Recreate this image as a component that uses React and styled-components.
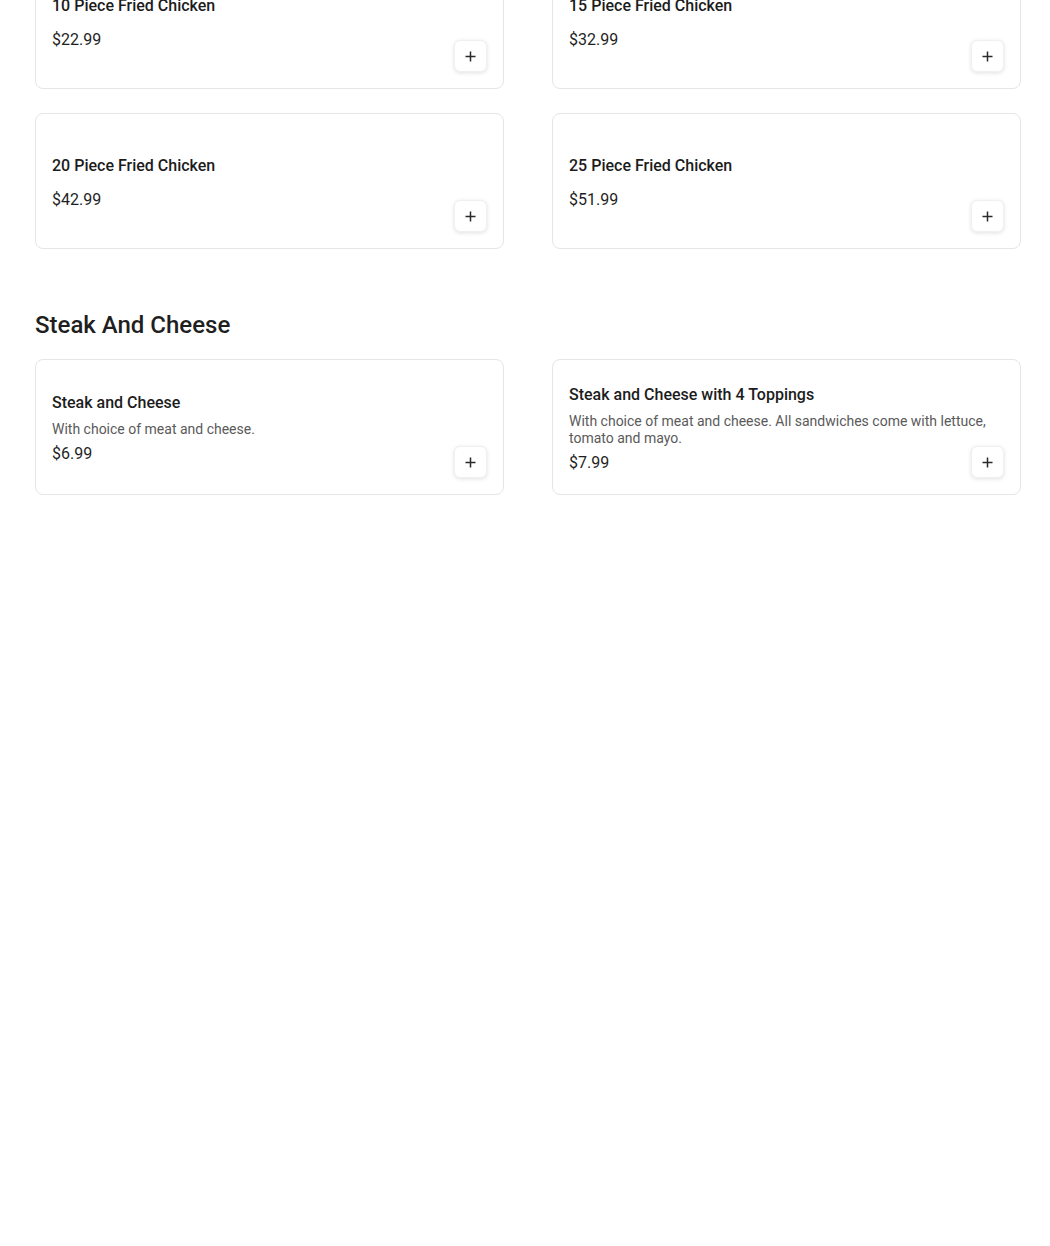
import React from 'react'
import styled, { createGlobalStyle } from 'styled-components'

const GlobalStyle = createGlobalStyle`
  body {
    margin: 0;
    background: #ffffff;
    font-family: Roboto, 'Liberation Sans', sans-serif;
    color: #1f1f1f;
  }
`

const Page = styled.div`
  box-sizing: border-box;
  width: 1050px;
  padding: 0 29px 40px 35px;
  margin-top: -47px;
`

const Section = styled.section`
  & + & {
    margin-top: 62px;
  }
`

const SectionTitle = styled.h2`
  margin: 0 0 20px;
  font-size: 24px;
  line-height: 28px;
  font-weight: 500;
  color: #1f1f1f;
`

const Grid = styled.div`
  display: grid;
  grid-template-columns: 469px 469px;
  column-gap: 48px;
  row-gap: 24px;
`

const Card = styled.div`
  box-sizing: border-box;
  height: 136px;
  padding: 16px;
  border: 1px solid #e6e6e6;
  border-radius: 8px;
  background: #fff;
  display: grid;
  grid-template: 1fr / 1fr;
`

const Info = styled.div`
  grid-area: 1 / 1;
  display: flex;
  flex-direction: column;
  justify-content: center;
  padding-top: 3px;
`

const Name = styled.div`
  font-size: 16px;
  line-height: 20px;
  font-weight: 500;
  color: #1c1c1c;
`

const Desc = styled.div`
  margin-top: 8px;
  font-size: 14px;
  line-height: 17px;
  color: #5a5a5a;
`

const Price = styled.div`
  margin-top: 6px;
  font-size: 16px;
  line-height: 20px;
  color: #1f1f1f;
`

const AddButton = styled.button`
  grid-area: 1 / 1;
  justify-self: end;
  align-self: end;
  width: 33px;
  height: 32px;
  padding: 0;
  border: 1px solid #f0f0f0;
  border-radius: 6px;
  background: #fff;
  box-shadow: 0 1px 4px rgba(0, 0, 0, 0.12);
  display: flex;
  align-items: center;
  justify-content: center;
  cursor: pointer;
`

const PlusIcon = () => (
  <svg width="11" height="11" viewBox="0 0 11 11">
    <path d="M5.5 0.5v10M0.5 5.5h10" stroke="#2a2a2a" strokeWidth="1.5" />
  </svg>
)

const Item = ({ name, desc, price }) => (
  <Card>
    <Info>
      <Name>{name}</Name>
      <Desc>{desc}</Desc>
      <Price>{price}</Price>
    </Info>
    <AddButton aria-label="Add">
      <PlusIcon />
    </AddButton>
  </Card>
)

const chicken = [
  { name: '10 Piece Fried Chicken', price: '$22.99' },
  { name: '15 Piece Fried Chicken', price: '$32.99' },
  { name: '20 Piece Fried Chicken', price: '$42.99' },
  { name: '25 Piece Fried Chicken', price: '$51.99' },
]

const steak = [
  { name: 'Steak and Cheese', desc: 'With choice of meat and cheese.', price: '$6.99' },
  {
    name: 'Steak and Cheese with 4 Toppings',
    desc: 'With choice of meat and cheese. All sandwiches come with lettuce, tomato and mayo.',
    price: '$7.99',
  },
]

export default function App() {
  return (
    <>
      <GlobalStyle />
      <Page>
        <Section>
          <Grid>
            {chicken.map((item) => (
              <Item key={item.name} {...item} />
            ))}
          </Grid>
        </Section>
        <Section>
          <SectionTitle>Steak And Cheese</SectionTitle>
          <Grid>
            {steak.map((item) => (
              <Item key={item.name} {...item} />
            ))}
          </Grid>
        </Section>
      </Page>
    </>
  )
}
